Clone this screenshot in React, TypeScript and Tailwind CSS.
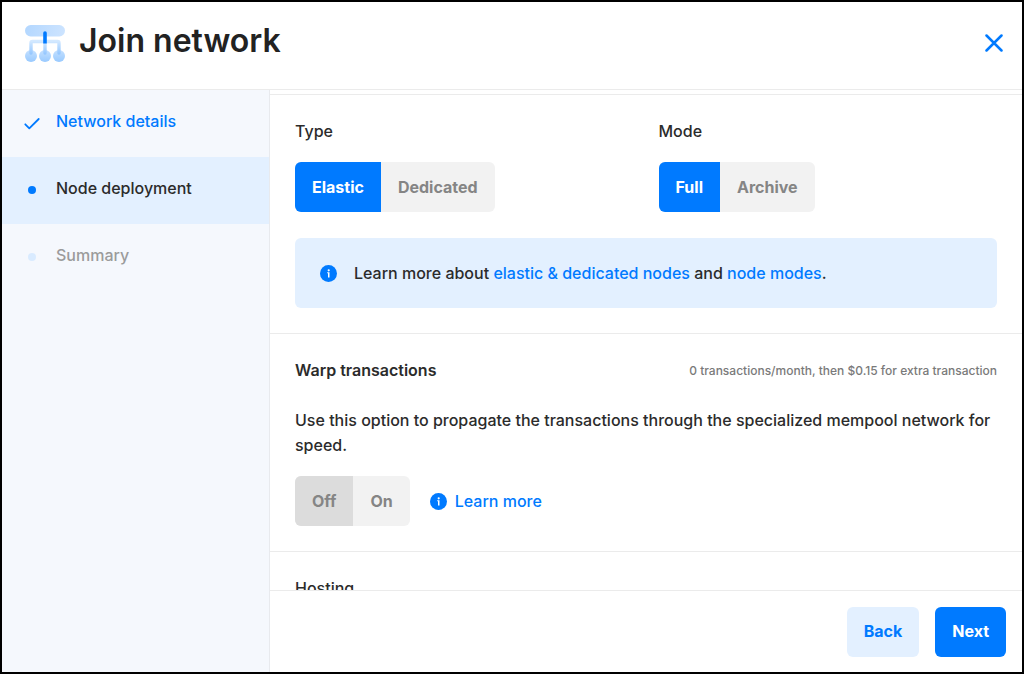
import React, { useState } from 'react'

interface ToggleProps {
  name: string
  label: string
  options: string[]
  initial: string
  muted?: boolean
}

const steps = [
  { id: 'network', label: 'Network details', state: 'done' },
  { id: 'node', label: 'Node deployment', state: 'current' },
  { id: 'summary', label: 'Summary', state: 'todo' },
]

function NetworkLogo() {
  return (
    <svg className="w-10 h-[38px] shrink-0" viewBox="0 0 40 38" fill="none" aria-hidden="true">
      <defs>
        <linearGradient id="bar" x1="0" y1="0" x2="40" y2="11" gradientUnits="userSpaceOnUse">
          <stop stopColor="#b3d7ff" />
          <stop offset="1" stopColor="#cde4ff" />
        </linearGradient>
        <linearGradient id="ball" x1="0" y1="25" x2="0" y2="37" gradientUnits="userSpaceOnUse">
          <stop stopColor="#c4e0ff" />
          <stop offset="1" stopColor="#99caff" />
        </linearGradient>
        <linearGradient id="tip" x1="0" y1="16" x2="0" y2="30" gradientUnits="userSpaceOnUse">
          <stop stopColor="#d4e9ff" />
          <stop offset="1" stopColor="#8fc4ff" />
        </linearGradient>
      </defs>
      <rect width="40" height="11.500" rx="5.700" fill="url(#bar)" />
      <circle cx="6" cy="31" r="6" fill="url(#ball)" />
      <circle cx="20" cy="31" r="6" fill="url(#ball)" />
      <circle cx="34" cy="31" r="6" fill="url(#ball)" />
      <path d="M6 28V18a1.500 1.500 0 0 1 1.500-1.500h25A1.500 1.500 0 0 1 34 18v10M20 17v11" stroke="url(#tip)" strokeWidth="3.400" strokeLinecap="round" />
      <path d="M18.200 18.500V8a1.800 1.800 0 0 1 3.600 0v10.500z" fill="#007aff" />
    </svg>
  )
}

function InfoIcon() {
  return (
    <svg className="w-[17px] h-[17px] shrink-0" viewBox="0 0 17 17" aria-hidden="true">
      <circle cx="8.500" cy="8.500" r="8.500" fill="#007aff" />
      <circle cx="8.700" cy="5.300" r="1.100" fill="#fff" />
      <path d="M7.200 7.300h2.300v5.200H8V8.300h-.8z" fill="#fff" />
    </svg>
  )
}

function StepMark({ state }: { state: string }) {
  if (state === 'done') {
    return (
      <svg className="w-4 h-4" viewBox="0 0 16 16" fill="none" aria-hidden="true">
        <path d="M1.300 9.300l4 4L14.700 4" stroke="#007aff" strokeWidth="1.800" strokeLinecap="round" strokeLinejoin="round" />
      </svg>
    )
  }
  return <span className={`w-2 h-2 rounded-full ${state === 'current' ? 'bg-[#007aff]' : 'bg-[#d9ebff]'}`} />
}

function Toggle({ name, label, options, initial, muted }: ToggleProps) {
  const [value, setValue] = useState(initial)
  const active = muted ? 'bg-[#dcdcdc] text-[#858585]' : 'bg-[#007aff] text-white'

  return (
    <div role="radiogroup" aria-label={label} className="relative inline-flex h-[50px] rounded-md overflow-hidden bg-[#f2f2f2]">
      {options.map(option => (
        <label
          key={option}
          className={`flex items-center px-[17px] font-bold cursor-pointer ${value === option ? active : 'text-[#858585]'}`}
        >
          <input
            type="radio"
            name={name}
            value={option}
            checked={value === option}
            onChange={() => setValue(option)}
            className="sr-only"
          />
          {option}
        </label>
      ))}
    </div>
  )
}

export default function App() {
  return (
    <div className="flex flex-col h-screen bg-white border-2 border-black text-base leading-[25px] font-medium text-[#2b2b2b] font-['Inter',sans-serif]">
      <header className="flex items-center justify-between h-[88px] shrink-0 px-[23px] pb-1 border-b border-[#ebebeb]">
        <div className="flex items-center gap-[14px]">
          <NetworkLogo />
          <h1 className="text-[32px] leading-10 font-semibold pb-1.5 text-[#222]">Join network</h1>
        </div>
        <button type="button" aria-label="Close" className="w-[18px] h-[18px] mb-0.5 mr-[-4px] cursor-pointer">
          <svg viewBox="0 0 18 18" fill="none" className="w-full h-full">
            <path d="M1.500 1.500l15 15M16.500 1.500l-15 15" stroke="#007aff" strokeWidth="2.500" strokeLinecap="round" />
          </svg>
        </button>
      </header>

      <div className="flex flex-1 min-h-0">
        {/* Steps */}
        <nav className="w-[268px] shrink-0 bg-[#f5f8fd] border-r border-[#e8eaee]">
          <ol>
            {steps.map(step => (
              <li
                key={step.id}
                className={`flex items-center gap-4 h-[67px] px-[22px] pb-0.5 ${step.state === 'current' ? 'bg-[#e3f0ff]' : ''}`}
              >
                <span className="flex justify-center w-4">
                  <StepMark state={step.state} />
                </span>
                {step.state === 'done' && <a href="#network" className="pb-0.5 text-[#007aff]">{step.label}</a>}
                {step.state === 'current' && <span aria-current="step" className="pb-0.5">{step.label}</span>}
                {step.state === 'todo' && <span className="pb-0.5 text-[#9b9b9b]">{step.label}</span>}
              </li>
            ))}
          </ol>
        </nav>

        <main className="flex flex-col flex-1 min-w-0">
          <div className="flex-1 min-h-0 overflow-hidden pt-1">
            <section className="border-t border-[#ebebeb] px-[25px] pt-6 pb-[25px]">
              <div className="grid grid-cols-2 gap-[25px]">
                <div>
                  <h2 className="mb-[18px]">Type</h2>
                  <Toggle name="type" label="Type" options={['Elastic', 'Dedicated']} initial="Elastic" />
                </div>
                <div>
                  <h2 className="mb-[18px]">Mode</h2>
                  <Toggle name="mode" label="Mode" options={['Full', 'Archive']} initial="Full" />
                </div>
              </div>
              <div className="flex items-center gap-[17px] h-[70px] mt-[26px] px-[25px] rounded-md bg-[#e3f0ff]">
                <InfoIcon />
                <p>
                  Learn more about <a href="#nodes" className="text-[#007aff]">elastic &amp; dedicated nodes</a> and{' '}
                  <a href="#modes" className="text-[#007aff]">node modes</a>.
                </p>
              </div>
            </section>

            <section className="border-t border-[#ebebeb] px-[25px] pt-6 pb-[25px]">
              <div className="flex items-center justify-between mb-[25px]">
                <h2 className="font-semibold">Warp transactions</h2>
                <p className="text-xs leading-[25px] text-[#7a7a7a]">0 transactions/month, then $0.15 for extra transaction</p>
              </div>
              <p className="mb-[18px]">
                Use this option to propagate the transactions through the specialized mempool network for speed.
              </p>
              <div className="flex items-center gap-5">
                <Toggle name="warp" label="Warp transactions" options={['Off', 'On']} initial="Off" muted />
                <a href="#warp" className="flex items-center gap-2 text-[#007aff]">
                  <InfoIcon />
                  Learn more
                </a>
              </div>
            </section>

            <section className="border-t border-[#ebebeb] px-[25px] pt-6 pb-[25px]">
              <h2>Hosting</h2>
            </section>
          </div>

          <footer className="flex items-center justify-end gap-4 h-[82px] shrink-0 px-4 border-t border-[#ebebeb]">
            <button type="button" className="h-[50px] px-[17px] rounded-md bg-[#e3f0ff] font-bold text-[#007aff] cursor-pointer">Back</button>
            <button type="button" className="h-[50px] px-[17px] rounded-md bg-[#007aff] font-bold text-white cursor-pointer">Next</button>
          </footer>
        </main>
      </div>
    </div>
  )
}
